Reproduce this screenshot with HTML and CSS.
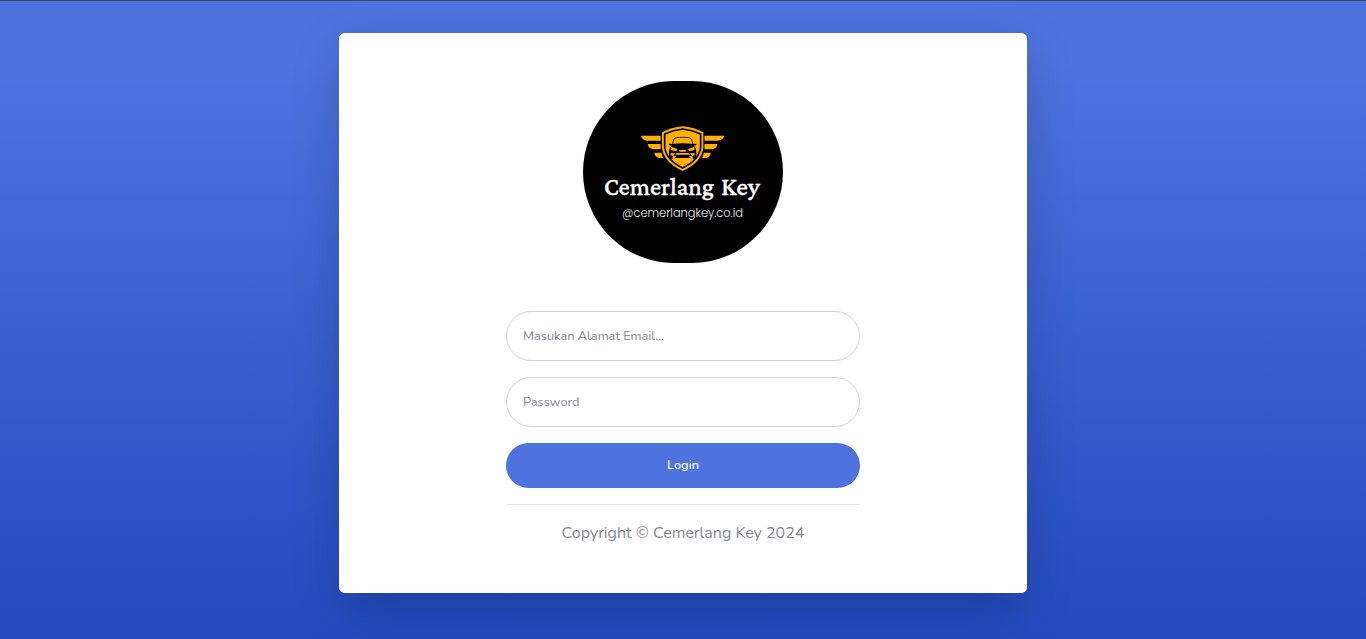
FILE: index.html
```html
<!DOCTYPE html>
<html lang="id">
<head>
<meta charset="utf-8">
<title>Login - Cemerlang Key</title>
<link rel="stylesheet" href="styles.css">
</head>
<body>
<main class="card">
  <svg class="logo" viewBox="0 0 200 182" role="img" aria-label="Cemerlang Key">
    <rect width="200" height="182" rx="91" fill="#000"/>
    <g transform="translate(52 39.3) scale(.33333)" fill="#ffb000">
      <g id="wing">
        <path d="M18 46H77V61H36Q21 59 18 46Z"/>
        <path d="M38 71H77V87H54Q40 84 38 71Z"/>
        <path d="M58 97H79L84 113H72Q60 110 58 97Z"/>
      </g>
      <use href="#wing" transform="translate(285.5 0) scale(-1 1)"/>
      <path d="M143 18Q177 21 205 36V80Q202 125 143 152Q84 125 81 80V36Q109 21 143 18Z"/>
      <path d="M143 26Q172 29 197 41V80Q193 119 143 143Q93 119 89 80V41Q114 29 143 26Z" fill="none" stroke="#000" stroke-width="5"/>
      <g fill="#000">
        <path d="M112 71L118 55Q121 51 143 51Q165 51 168 55L174 71" fill="none" stroke="#000" stroke-width="2.5"/>
        <path d="M102 70L110 71Q143 66 176 71L184 70V74L177 76Q184 84 184 96V115H173V107H113V115H102V96Q102 84 109 76L102 74Z"/>
        <path d="M108 79L127 86L124 93L107 89ZM178 79L159 86L162 93L179 89ZM107 98L121 99L115 107L107 105ZM179 98L165 99L171 107L179 105ZM132 89H154L152 94H134ZM125 98H161L166 103H120Z" fill="#ffb000"/>
        <path d="M125 106H161L168 113H118Z"/>
      </g>
    </g>
    <text class="brand" x="21" y="114" textLength="110" lengthAdjust="spacingAndGlyphs">Cemerlang</text>
    <text class="brand" x="138" y="114" textLength="39" lengthAdjust="spacingAndGlyphs">Key</text>
    <text class="handle" x="39" y="136" textLength="121" lengthAdjust="spacingAndGlyphs">@cemerlangkey.co.id</text>
  </svg>
  <form class="form">
    <input class="field" type="email" placeholder="Masukan Alamat Email..." aria-label="Email">
    <input class="field" type="password" placeholder="Password" aria-label="Password">
    <button class="login" type="button">Login</button>
    <hr class="divider">
    <p class="copyright">Copyright © Cemerlang Key 2024</p>
  </form>
</main>
</body>
</html>
```

FILE: styles.css
```css
* { box-sizing: border-box; }
html { height: 100%; }
body {
  margin: 0;
  height: 100%;
  overflow: hidden;
  padding-top: 32px;
  border-top: 1px solid #3c4557;
  font-family: Nunito, "Noto Sans", sans-serif;
  background: linear-gradient(180deg, #4e73df 10%, #224abe 100%);
}
.card {
  display: flex;
  flex-direction: column;
  align-items: center;
  width: 688px;
  height: 560px;
  margin: 0 auto;
  padding-top: 48px;
  border-radius: 5.6px;
  background: #fff;
  box-shadow: 0 16px 48px rgba(0, 0, 0, .175);
}
.logo { display: block; width: 200px; height: 182px; }
.brand {
  font-family: "Crimson Pro", "Crimson Text", "EB Garamond", "Liberation Serif", serif;
  font-size: 24.5px;
  font-weight: 500;
  fill: #fff;
  stroke: #fff;
  stroke-width: .3px;
}
.handle {
  font-family: Poppins, Inter, sans-serif;
  font-size: 12px;
  font-weight: 300;
  fill: #f0f0f0;
}
.form {
  display: flex;
  flex-direction: column;
  width: 354px;
  margin-top: 48px;
}
.field {
  width: 100%;
  height: 50px;
  margin: 0 0 16px;
  padding: 0 16px;
  border: 1px solid #d1d3e2;
  border-radius: 25px;
  background: #fff;
  font-family: inherit;
  font-size: 12.8px;
  outline: none;
}
.field::placeholder { color: #858796; opacity: 1; }
.login {
  height: 45px;
  padding: 0 0 2px;
  border: 0;
  border-radius: 23px;
  background: #4e73df;
  color: #fff;
  font-family: inherit;
  font-size: 12.8px;
  font-weight: 500;
}
.divider {
  width: 100%;
  margin: 16px 0;
  border: 0;
  border-top: 1px solid #e5e5e5;
}
.copyright {
  margin: 0;
  text-align: center;
  color: #858796;
  font-size: 16px;
  line-height: 24px;
}
```
